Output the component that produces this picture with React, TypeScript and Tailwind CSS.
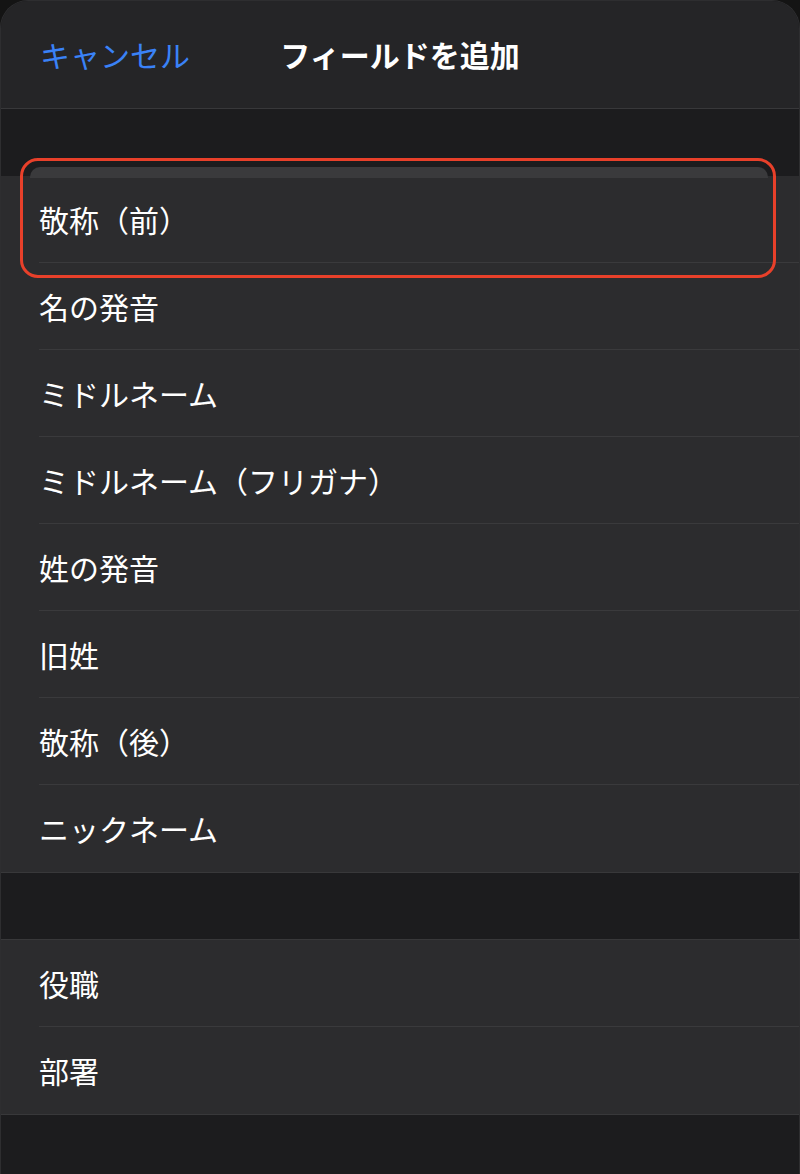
import React from 'react';

const FONT = {
  fontFamily: '"Noto Sans CJK JP", "Noto Sans", sans-serif',
};

const nameFields = [
  '敬称（前）',
  '名の発音',
  'ミドルネーム',
  'ミドルネーム（フリガナ）',
  '姓の発音',
  '旧姓',
  '敬称（後）',
  'ニックネーム',
];

const workFields = ['役職', '部署'];

const Row: React.FC<{ label: string; last?: boolean }> = ({ label, last }) => (
  <div className="h-[87px] pl-[38px] bg-[#2c2c2e]">
    <div
      className={`h-full flex items-center text-[30px] text-white ${
        last ? '' : 'border-b border-[#3a3a3c]'
      }`}
    >
      {label}
    </div>
  </div>
);

export default function App() {
  return (
    <div className="w-[800px] h-[1174px] bg-[#141414] overflow-hidden" style={FONT}>
      <div className="h-full rounded-t-[28px] bg-[#1c1c1e] border-t border-x border-[#2e2e30] overflow-hidden">
        {/* header */}
        <div className="h-[108px] bg-[#252527] border-b border-[#38383a] relative flex items-center">
          <span className="pl-[39px] text-[30px] text-[#3a82f7]">キャンセル</span>
          <span className="absolute left-0 right-0 text-center text-[30px] font-bold text-white pointer-events-none">
            フィールドを追加
          </span>
        </div>

        <div className="h-[67px]" />

        {/* first group */}
        <div className="relative border-b border-[#38383a]">
          {nameFields.map((f, i) => (
            <Row key={f} label={f} last={i === nameFields.length - 1} />
          ))}
          {/* highlight */}
          <div className="absolute left-[29px] top-[-9px] w-[738px] h-[11px] rounded-t-[10px] bg-[#3a3a3c]" />
          <div className="absolute left-[19px] top-[-18px] w-[756px] h-[120px] rounded-[18px] border-[3px] border-[#e8402a]" />
        </div>

        <div className="h-[66px]" />

        {/* second group */}
        <div className="border-y border-[#38383a]">
          {workFields.map((f, i) => (
            <Row key={f} label={f} last={i === workFields.length - 1} />
          ))}
        </div>
      </div>
    </div>
  );
}
